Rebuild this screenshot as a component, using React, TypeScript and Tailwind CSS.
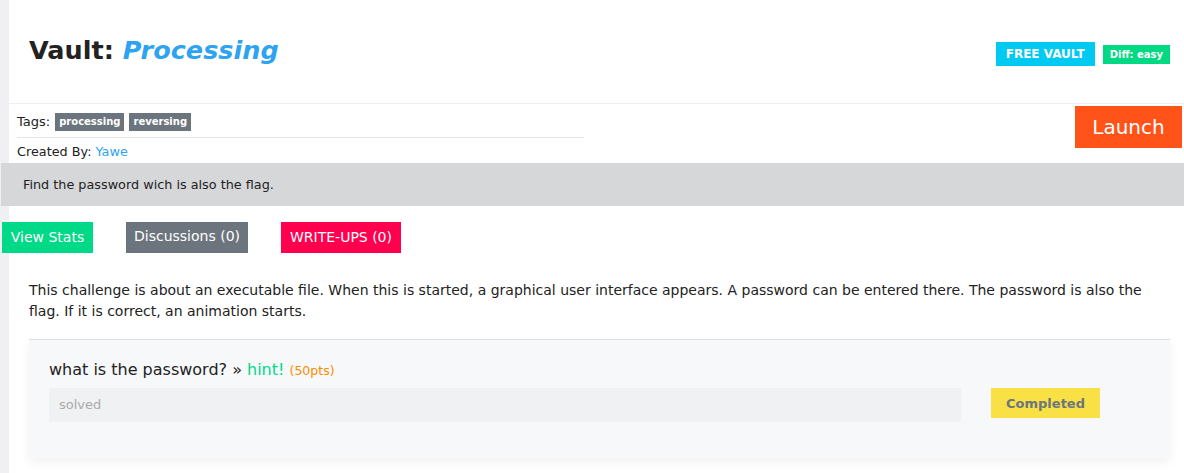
export default function App() {
  return (
    <div
      className="w-[1184px] h-[473px] overflow-hidden bg-white flex text-[#222]"
      style={{ fontFamily: '"DejaVu Sans", sans-serif' }}
    >
      <div className="w-[9px] shrink-0 bg-[#efeff4]" />
      <div className="flex-1 flex flex-col">
        {/* header */}
        <div className="h-[104px] border-b border-[#eeeeee] flex items-start justify-between pl-[20px] pr-[14px]">
          <h1 className="mt-[32px] text-[25.5px] font-bold leading-[36px]">
            Vault: <span className="italic text-[#2ea3f2]">Processing</span>
          </h1>
          <div className="mt-[42px] flex items-center gap-[8px]">
            <span className="h-[24px] w-[99px] flex items-center justify-center bg-[#00c9f2] text-white text-[12px] font-bold">
              FREE VAULT
            </span>
            <span className="h-[19px] px-[7px] flex items-center bg-[#00d983] text-white text-[10px] font-bold">
              Diff: easy
            </span>
          </div>
        </div>

        {/* meta */}
        <div className="flex justify-between pr-[2px]">
          <div className="pl-[8px] w-[575px]">
            <div className="h-[34px] border-b border-[#e5e5e5] flex items-center gap-[5px] text-[13px] pt-[2px]">
              <span>Tags:</span>
              <span className="bg-[#6c757d] text-white text-[10px] font-bold px-[4px] h-[18px] flex items-center">
                processing
              </span>
              <span className="bg-[#6c757d] text-white text-[10px] font-bold px-[4px] h-[18px] flex items-center">
                reversing
              </span>
            </div>
            <div className="h-[25px] flex items-center text-[12.8px] pt-[2px]">
              Created By:&nbsp;<span className="text-[#2ea3f2]">Yawe</span>
            </div>
          </div>
          <button className="mt-[2px] h-[42px] w-[107px] bg-[#ff531a] text-white text-[20px]">
            Launch
          </button>
        </div>

        {/* description band */}
        <div className="-ml-[8px] h-[43px] bg-[#d6d7d9] flex items-center pl-[22px] text-[12.8px] text-[#222]">
          Find the password wich is also the flag.
        </div>

        {/* actions */}
        <div className="-ml-[7px] mt-[16px] flex gap-[33px] text-[14px] text-white">
          <button className="h-[31px] w-[91px] bg-[#00d987]">View Stats</button>
          <button className="h-[31px] w-[122px] bg-[#6c757d] pb-[3px]">Discussions (0)</button>
          <button className="h-[31px] w-[120px] bg-[#ff004f]">WRITE-UPS (0)</button>
        </div>

        <p className="mt-[27px] pl-[20px] pr-[30px] text-[14px] leading-[21px]">
          This challenge is about an executable file. When this is started, a graphical user interface appears. A
          password can be entered there. The password is also the flag. If it is correct, an animation starts.
        </p>

        {/* question card */}
        <div className="ml-[20px] mr-[14px] mt-[17px] h-[119px] bg-[#f7f8fa] border-t border-[#dddddd] shadow-[0_4px_10px_rgba(0,0,0,0.06)] pl-[20px] pt-[20px]">
          <div className="text-[16px] leading-[20px] text-[#222]">
            what is the password? » <span className="text-[#00d98a]">hint!</span>{" "}
            <span className="text-[12.5px] text-[#ff8c00]">(50pts)</span>
          </div>
          <div className="mt-[7px] flex items-start">
            <div className="w-[912px] h-[34px] bg-[#f0f1f3] flex items-center pl-[10px] text-[13px] text-[#aaaaaa]">
              solved
            </div>
            <button className="ml-[30px] h-[30px] w-[109px] bg-[#f8e045] text-[#6c757d] text-[13px] font-bold pt-[2px]">
              Completed
            </button>
          </div>
        </div>
      </div>
    </div>
  );
}
